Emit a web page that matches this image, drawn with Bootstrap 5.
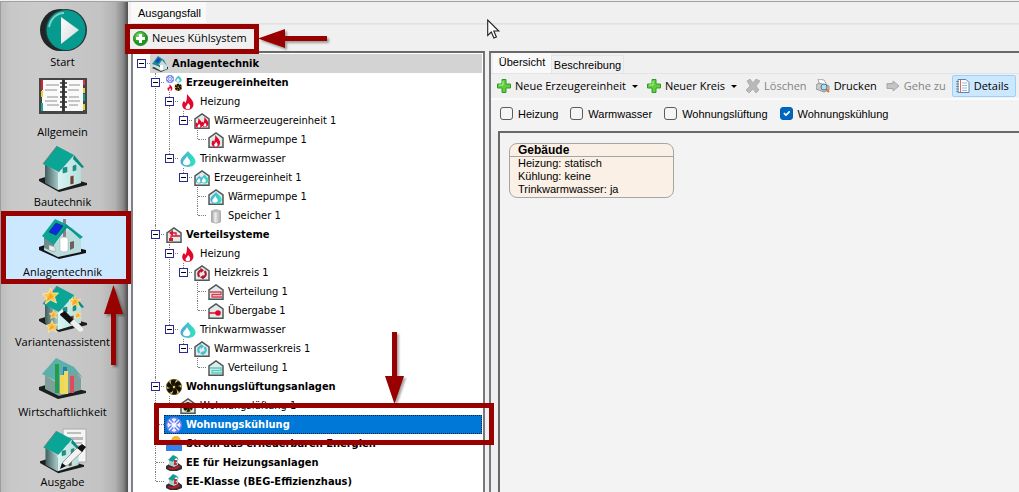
<!DOCTYPE html>
<html lang="de">
<head>
<meta charset="utf-8">
<meta name="viewport" content="width=device-width, initial-scale=1">
<title>Anlagentechnik</title>
<link href="https://cdn.jsdelivr.net/npm/bootstrap@5.3.0/dist/css/bootstrap.min.css" rel="stylesheet">
<style>
:root { --mark: #990000; }
body { font: 11px/16px "Open Sans", "Noto Sans", sans-serif; color: #000; background: #f0f0f0; }
button { font: inherit; color: inherit; }
.work { font-family: "Liberation Sans", Arial, sans-serif; min-width: 0; padding-left: 3px; }
.topline { border-top: 1px solid #a0a0a0; margin-top: 1px; }
.split { min-height: 0; }

/* module bar */
.modules { width: 128px; padding: 0 0 0 2px; border-left: 1px solid #9c9c9c;
  background: linear-gradient(90deg, #bcbcbc 0, #c8c8c8 10px, #cbcbcb 40px, #c3c3c3 100px, #b2b2b2 114px, #8a8a8a 122px, #4e4e4e 100%); }
.module { height: 70px; padding: 2px 0 0; border: 0; background: none; width: 119px; }
.module svg { width: 48px; height: 48px; display: block; margin: 0 auto; }
.module.current { background: #cce8ff; box-shadow: inset 0 0 0 1px #99d1ff; width: 124px; padding-right: 5px; }
.module-label { display: block; font-size: 11px; white-space: nowrap; }
.outline { position: absolute; border: 5px solid var(--mark); pointer-events: none; z-index: 5; }
.module .outline { top: -1px; bottom: -2px; left: -2px; right: -4px; }
.pointer { position: absolute; z-index: 6; pointer-events: none; overflow: visible; fill: var(--mark); filter: drop-shadow(2px 2px 1px rgba(0,0,0,.35)); }
.module svg.pointer { width: 19px; height: 80px; top: 73px; left: 101px; margin: 0; }
.create svg.pointer { left: 130px; top: 4px; }
.node svg.pointer { right: 78px; top: -83px; }

/* case tab and main toolbar */
.casebar { height: 22px; border-bottom: 1px solid #e2e2e2; }
.casetab { background: #f9f9f9; padding: 1px 7px 0; width: 75px; height: 21px; border: 0; text-align: left; }
.mainbar { height: 27px; border-top: 1px solid #e6e6e6; }
.create { border: 0; background: none; padding: 0 8px; gap: 4px; width: 134px; margin-left: -6px; font-family: "Open Sans", sans-serif; }
.create .outline { inset: -1px 0 -3px 0; }

/* tree */
.pane { border: 2px solid #696969; border-color: #696969 #a0a0a0 #a0a0a0 #808088; border-bottom: 0; }
.treepane { flex: 0 0 354px; background: #fff; padding: 1px 1px 0 0; font-family: "DejaVu Sans Condensed", "DejaVu Sans", sans-serif; border-right-color: #77777c; }
.tree ul { padding-left: 14px; }
.tree ul > li::before { content: ""; position: absolute; left: 8px; top: 0; bottom: 0; border-left: 1px dotted #808080; }
.tree ul > li:last-child::before { bottom: auto; height: 9px; }
.tree li { position: relative; }
.node { position: relative; height: 19px; padding-left: 4px; }
.node::before { content: ""; position: absolute; left: 9px; top: 9px; width: 8px; border-top: 1px dotted #808080; }
.toggle { width: 9px; height: 9px; border: 1px solid #2a2a90; background: #fff; padding: 0; position: relative; flex: none; }
.toggle::after { content: ""; display: block; height: 1px; background: #000; margin: 0 1px; }
.leafgap { width: 9px; flex: none; }
.nodetext { margin-left: 4px; padding: 1px 0 0 2px; height: 19px; gap: 4px; line-height: 18px; white-space: nowrap; }
.nodetext svg { width: 16px; height: 16px; flex: none; overflow: visible; }
.top-node > .nodetext { background: #d3d3d3; }
.chosen > .nodetext { background: #0078d7; color: #fff; outline: 1px dotted #10243a; outline-offset: -1px; }
.node .outline { left: 7px; right: -12px; top: -12px; bottom: -11px; }

/* overview */
.overview { border-right: 0; border-color: #696969 #696969 #696969 #77777c; margin-left: 4px; min-width: 0; }
.viewtabs { padding-left: 2px; }
.viewtab { border: 0; background: #f0f0f0; }
.viewtab.active { background: #f9f9f9; width: 58px; height: 20px; padding: 0 0 2px; }
.viewtab.other { width: 73px; height: 18px; border: 1px solid #e4e4e4; border-bottom: 0; padding: 0; }
.actions { height: 27px; border-top: 1px solid #e4e4e4; padding-left: 6px; gap: 9px; border-bottom: 2px solid #fbfbfb; font-family: "Open Sans", sans-serif; }
.action { border: 0; background: none; padding: 0; gap: 4px; white-space: nowrap; height: 22px; }
.action svg { width: 14px; height: 14px; }
.action:disabled { color: #838383; }
.action.drop::after { content: ""; border: 3px solid transparent; border-top-color: #000; border-bottom: 0; margin-left: 2px; }
.action.pressed { background: #cce8ff; border: 1px solid #99d1ff; border-radius: 2px; padding: 0 6px 0 3px; margin-left: -3px; }
.filters { background: #f3f3f3; height: 31px; padding: 0 0 4px 9px; gap: 12px; }
.filters label { gap: 5px; }
.filters .form-check-input { width: 13px; height: 13px; margin: 0; border: 1px solid #5c5c5c; border-radius: 3px; background-color: #f5f5f5; box-shadow: none; }
.filters .form-check-input:checked { background-color: #0067c0; border-color: #005fb8; background-size: 11px; }
.canvas { background: #f3f3f3; border-left: 2px solid #696969; border-top: 2px solid #696969; margin-left: 7px; padding: 10px 9px; }
.building { width: 165px; height: 55px; border: 1px solid #a5a5a5; border-radius: 8px; background: #faf0e6; }
.building h2 { font: bold 12px/12px "Liberation Sans", sans-serif; margin: 0; padding: 0 8px; border-bottom: 1px solid #a5a5a5; height: 13px; }
.building p { margin: 0; padding: 0 8px; line-height: 13px; }
.cursor { position: absolute; left: 359px; top: 17px; z-index: 9; }
</style>
</head>
<body>
<svg width="0" height="0" class="position-absolute" aria-hidden="true">
  <defs>
    <linearGradient id="steel"><stop offset="0" stop-color="#999"/><stop offset=".4" stop-color="#eee"/><stop offset="1" stop-color="#aaa"/></linearGradient>
    <linearGradient id="wall"><stop offset="0" stop-color="#d8f4f2"/><stop offset="1" stop-color="#b4dedd"/></linearGradient>
    <linearGradient id="side"><stop offset="0" stop-color="#3f5d5d"/><stop offset="1" stop-color="#a9c9c8"/></linearGradient>
    <linearGradient id="aqua"><stop offset="0" stop-color="#4fa9d8"/><stop offset="1" stop-color="#2fe5c0"/></linearGradient>
    <linearGradient id="play" x2="1" y2="1"><stop offset="0" stop-color="#fff"/><stop offset="1" stop-color="#cfd8d8"/></linearGradient>
    <radialGradient id="leaf" cx=".4" cy=".3"><stop offset="0" stop-color="#8fe26f"/><stop offset="1" stop-color="#1d9420"/></radialGradient>
    <symbol id="house" viewBox="0 1 48 48"><path d="M0 34l16-5 32 9v2L20 47 0 36z" fill="#1c1c1c"/><path d="M6 19l13 9v17L6 38z" fill="url(#side)"/><path d="M19 28L34 12l8 10v16l-23 7z" fill="url(#wall)"/><path d="M18 1l17 9-15 17L4 19z" fill="#0aa594"/><path d="M35 10l10 12-2 1-9-9z" fill="#078c7f"/><path d="M18 1L4 19" stroke="#6a7c7b"/><path d="M24 23l4-1v5l-4 1zM34 21l3-1v5l-3 1z" fill="#10978c" stroke="#3b7774" stroke-width=".6"/><path d="M31 31l4-1v9l-4 1z" fill="#6b4435" stroke="#dceeee" stroke-width=".7"/></symbol>
    <symbol id="star" viewBox="0 0 16 16"><path d="M8 0l2 5 6 0-4 4 2 6-6-3-5 4 1-6-4-4 6-1z" fill="#ffc64c" stroke="#fff3ae" stroke-width=".8"/><path d="M8 5l3 4-3 2-4 2 1-3z" fill="#f7a823"/></symbol>
    <symbol id="hut" viewBox="0 0 16 16"><path d="M1 15.300V6l7-5 7 5v9.300z" fill="#e3eaea" stroke="#4f5757" stroke-width="1.500"/></symbol>
    <symbol id="flame" viewBox="0 0 16 16"><path d="M7 0c2 3 5 5 6 8 1.500 4-1 8-5 8-5 0-7-4-5-8l1-1 1.500 2C7 6 7 3 7 0z" fill="#e3062c"/><path d="M8 9c2 2 2.500 3 2 5-.5 1.800-4 1.800-4.300 0C5 12 7.500 11.500 8 9z" fill="#fff"/></symbol>
    <symbol id="drop" viewBox="0 0 16 16"><path d="M8 0c2 3 8 6.500 7.500 11-1 6.500-14 6.500-15 0C0 6.500 6 3 8 0z" fill="url(#aqua)"/><path d="M7 5c1 3 4 4.500 3.300 7-1 3-6.800 3-7.300 0C3 9 6 8 7 5z" fill="#fff"/></symbol>
    <symbol id="flakes" viewBox="0 0 16 16"><circle cx="8" cy="8" r="8" fill="#6b7ff2"/><path d="M8 1v14M1 8h14M3 3l10 10M13 3L3 13M6 2l2 2 2-2M6 14l2-2 2 2M2 6l2 2-2 2M14 6l-2 2 2 2" fill="none" stroke="#fff" stroke-width="1.100"/></symbol>
    <symbol id="fan" viewBox="0 0 16 16"><circle cx="8" cy="8" r="7.700" fill="#f0cc4c" stroke="#332a10" stroke-width=".6"/><g fill="#14110a"><path id="bl" d="M8 8C5 6 4 3 5.500 1 7 .3 8.500.3 10 1 9 3 9 5 8 8z"/><use href="#bl" transform="rotate(60 8 8)"/><use href="#bl" transform="rotate(120 8 8)"/><use href="#bl" transform="rotate(180 8 8)"/><use href="#bl" transform="rotate(240 8 8)"/><use href="#bl" transform="rotate(300 8 8)"/></g><circle cx="8" cy="8" r="1.200" fill="#e8c84c"/></symbol>
    <symbol id="cycle" viewBox="0 0 16 16"><path d="M5 12A4.500 4.500 0 0 1 5 5l2-1M11 5a4.500 4.500 0 0 1 0 7l-2 1" fill="none" stroke="currentColor" stroke-width="2.600"/><path d="M6 1L10.500 4 6.500 7.500zM10 9.500l-4.500 3 4.500 3z" fill="currentColor"/></symbol>
    <symbol id="coil" viewBox="0 0 16 16"><path d="M2 8h11v2.500H4V13h10" fill="none" stroke="currentColor" stroke-width="1.300"/></symbol>
    <symbol id="eehouse" viewBox="0 0 16 16"><path d="M0 11l5-3 7 0 4 3v3l-5 2H4l-4-2z" fill="#30302f"/><path d="M3 5l5 2 4-3v6l-4 2-5-2z" fill="#a9cfcf"/><path d="M7 0L2 5l5 2 3-4 3 2-2-3z" fill="#159c90"/><path d="M2 12q6 2 11-2l1 2q-5 4-11 2z" fill="#c61725"/><path d="M9 5v5M8 6l3 0M8 9h3" stroke="#c61725" stroke-width="1.300"/></symbol>
    <symbol id="cross" viewBox="0 0 14 14"><path d="M5 .5h4V5h4.500v4H9v4.500H5V9H.5V5H5z" fill="#62ce3d" stroke="#2c9c26"/><path d="M6 2v4H2" fill="none" stroke="#b5f09a"/></symbol>
  </defs>
</svg>

<div class="d-flex vh-100 overflow-hidden">
  <nav class="modules flex-shrink-0 d-flex flex-column topline" aria-label="Module">
    <button class="module" type="button">
      <svg viewBox="0 0 48 48"><ellipse cx="21" cy="24" rx="20" ry="21" fill="#202626"/><ellipse cx="27" cy="24" rx="21" ry="21" fill="#263333"/><ellipse cx="27" cy="24" rx="19.500" ry="20" fill="#079b90"/><path d="M10 21C12 12 18 7 25 7" fill="none" stroke="#7ed0c9" stroke-width="2"/><path d="M22 11l18 13-18 14z" fill="url(#play)"/></svg>
      <span class="module-label">Start</span></button>
    <button class="module" type="button">
      <svg viewBox="0 0 48 48"><path d="M0 2h48v36H0z" fill="#454545"/><path d="M3 4h20v31H3zM26 4h18v31H26z" fill="#fafafa"/><path d="M2 4h2v10H2z" fill="#d92331"/><path d="M2 15h2v6H2z" fill="#e5d32e"/><path d="M2 27h2v8H2z" fill="#19a7a0"/><path d="M44 4h2v5h-2z" fill="#df3048"/><path d="M44 12h2v5h-2zM44 28h2v6h-2z" fill="#e5d32e"/><path d="M44 18h2v7h-2z" fill="#149993"/><path d="M7 9h13M6 14h12M8 21h11M6 25h12M8 29h12M30 9h11M29 14h11M30 21h10M29 25h12M30 29h9" stroke="#777" stroke-width=".8"/><path d="M24.500 3v34" stroke="#333" stroke-width="2"/><path d="M21 7h7M21 11h7M21 16h7M21 21h7M21 26h7M21 31h7" stroke="#333" stroke-width="1.300"/></svg>
      <span class="module-label">Allgemein</span></button>
    <button class="module" type="button">
      <svg viewBox="0 0 48 48"><use href="#house"/></svg>
      <span class="module-label">Bautechnik</span></button>
    <button class="module current position-relative" type="button" aria-current="page">
      <svg viewBox="0 0 48 48"><path d="M0 31l14-5 33 8v3l-27 6L0 34z" fill="#141414"/><path d="M5 20l11 6 17-15 9 10v15l-23 5-14-7z" fill="#b9dcde"/><path d="M5 20l10 7v9l-10-4z" fill="#708b8b"/><path d="M24 3h3v24h-3z" fill="#927f80"/><path d="M16 3l11 5 17 13-3 2-14-13-12 19L3 20z" fill="#0aa594"/><path d="M27 8L15 28l13-16 15 10z" fill="#0a9487"/><path d="M17 7l7 3-7 9-7-3z" fill="#1029df" stroke="#05246b" stroke-width=".6"/><path d="M21 22q4-2 8 0v13q-4 2-8 0z" fill="#fff" stroke="#9aa" stroke-width=".5"/><path d="M31 26l4-1v7l-4 2z" fill="#725c5c"/><path d="M10 29l6 2v5l-6-2z" fill="#e8eef0" stroke="#999" stroke-width=".5"/></svg>
      <span class="module-label">Anlagentechnik</span>
      <span class="outline"></span>
      <svg class="pointer" viewBox="0 0 19 80"><path d="M9.500 0L19 29h-7v51H7V29H0z"/></svg></button>
    <button class="module" type="button">
      <svg viewBox="0 0 48 48"><use href="#house"/><use href="#star" x="3" y="2" width="17" height="16"/><use href="#star" x="30" y="9" width="12" height="13"/><use href="#star" x="10" y="24" width="9" height="9"/><use href="#star" x="35" y="25" width="8" height="8"/><use href="#star" x="7" y="34" width="12" height="13"/><path d="M22 26l4-1 9 9-4 4-10-9z" fill="#111"/><path d="M31 37l4-4 10 10q-1 4-5 3z" fill="#eee" stroke="#aaa" stroke-width=".5"/><path d="M20 27l4-2" stroke="#fff" stroke-width="2"/></svg>
      <span class="module-label">Variantenassistent</span></button>
    <button class="module" type="button">
      <svg viewBox="0 0 48 48"><path d="M0 31l14-4 33 8v2l-28 6L0 34z" fill="#1b1f1e"/><path d="M6 19l12 8 16-14 8 9v12l-22 6-14-7z" fill="#7f9f9c"/><path d="M17 2l18 9 9 11-10-7-15 11L3 18z" fill="#5bb0a9"/><path d="M16 8h4v29h-4z" fill="#249c4d"/><path d="M21 19h4v19h-4z" fill="#efd954"/><path d="M24 11h4v8h-4z" fill="#257db3"/><path d="M25 15h4v23h-4z" fill="#efdb61"/><path d="M31 20h4v17h-4z" fill="#df4b5d"/></svg>
      <span class="module-label">Wirtschaftlichkeit</span></button>
    <button class="module" type="button">
      <svg viewBox="0 0 48 48"><path d="M24 3h23v33H24z" fill="#f4f4f4" stroke="#aaa"/><path d="M28 7h14M28 17h15M31 20h12" stroke="#888"/><path d="M27 11h17v3H27z" fill="#bbb"/><use href="#house" x="0" y="5" width="46" height="44"/><path d="M24 36l15-15 5 4-15 14-7 3z" fill="#f3f3f3" stroke="#777" stroke-width=".7"/><path d="M38 22l5-4 4 3-4 5z" fill="#111"/><path d="M21 43l2-6 4 3z" fill="#111"/></svg>
      <span class="module-label">Ausgabe</span></button>
  </nav>

  <main class="work flex-grow-1 d-flex flex-column position-relative topline">
    <svg class="cursor" width="14" height="21" viewBox="0 0 14 21"><path d="M.7 1v15.500l3.600-3.500 2.600 6 2.500-1-2.600-6h5z" fill="#fff" stroke="#222" stroke-width="1.100"/></svg>
    <div class="casebar flex-shrink-0"><button class="casetab" type="button">Ausgangsfall</button></div>
    <div class="mainbar flex-shrink-0 d-flex">
      <button class="create d-flex align-items-center position-relative" type="button">
        <svg width="15" height="15" viewBox="0 0 15 15"><circle cx="7.500" cy="7.500" r="7" fill="url(#leaf)" stroke="#27882a"/><path d="M6 3h3v3h3v3H9v3H6V9H3V6h3z" fill="#fff"/></svg>
        Neues Kühlsystem
        <span class="outline"></span>
        <svg class="pointer" width="74" height="19" viewBox="0 0 74 19"><path d="M3 9.500L30 0v7h42v5H30v7z"/></svg>
      </button>
    </div>
    <div class="split d-flex flex-grow-1">
      <section class="pane treepane" aria-label="Anlagenbaum">
        <ul class="tree list-unstyled m-0">
          <li><div class="node top-node d-flex"><button class="toggle align-self-center" aria-label="Zuklappen"></button><div class="nodetext flex-grow-1 d-flex align-items-center fw-bold"><svg viewBox="0 0 16 16"><path d="M0 12l5-3 11 2v2l-7 3z" fill="#333"/><path d="M2 8l6 3 4-5 3 3v4l-6 2-7-4z" fill="#c8e2e2"/><path d="M6 0L0 8l6 2 4-6 5 6-3-6z" fill="#168e98"/><path d="M6 2l3 1-3 4-3-1z" fill="#1745c8"/><path d="M8 9h3v5H8z" fill="#fff"/></svg>Anlagentechnik</div></div>
            <ul class="list-unstyled">
              <li><div class="node d-flex"><button class="toggle align-self-center" aria-label="Zuklappen"></button><div class="nodetext flex-grow-1 d-flex align-items-center fw-bold"><svg viewBox="0 0 16 16"><use href="#flakes" width="8" height="8"/><use href="#drop" x="9" width="7" height="8"/><use href="#flame" y="9" width="8" height="7"/><use href="#fan" x="8.500" y="8.500" width="7.500" height="7.500"/></svg>Erzeugereinheiten</div></div>
                <ul class="list-unstyled">
                  <li><div class="node d-flex"><button class="toggle align-self-center" aria-label="Zuklappen"></button><div class="nodetext d-flex align-items-center"><svg><use href="#flame"/></svg>Heizung</div></div>
                    <ul class="list-unstyled"><li><div class="node d-flex"><button class="toggle align-self-center" aria-label="Zuklappen"></button><div class="nodetext d-flex align-items-center"><svg viewBox="0 0 16 16"><use href="#hut"/><use href="#flame" x="0" y="5" width="10" height="10"/><use href="#flame" x="6" y="3" width="10" height="12"/></svg>Wärmeerzeugereinheit 1</div></div>
                      <ul class="list-unstyled"><li><div class="node d-flex"><span class="leafgap"></span><div class="nodetext d-flex align-items-center"><svg viewBox="0 0 16 16"><use href="#hut"/><use href="#flame" x="2" y="3" width="12" height="12"/></svg>Wärmepumpe 1</div></div></li></ul></li></ul></li>
                  <li><div class="node d-flex"><button class="toggle align-self-center" aria-label="Zuklappen"></button><div class="nodetext d-flex align-items-center"><svg><use href="#drop"/></svg>Trinkwarmwasser</div></div>
                    <ul class="list-unstyled"><li><div class="node d-flex"><button class="toggle align-self-center" aria-label="Zuklappen"></button><div class="nodetext d-flex align-items-center"><svg viewBox="0 0 16 16"><use href="#hut"/><use href="#drop" x="1.500" y="5" width="8" height="9"/><use href="#drop" x="6" y="4" width="9" height="10"/></svg>Erzeugereinheit 1</div></div>
                      <ul class="list-unstyled"><li><div class="node d-flex"><span class="leafgap"></span><div class="nodetext d-flex align-items-center"><svg viewBox="0 0 16 16"><use href="#hut"/><use href="#drop" x="2" y="3" width="12" height="12"/></svg>Wärmepumpe 1</div></div></li>
                        <li><div class="node d-flex"><span class="leafgap"></span><div class="nodetext d-flex align-items-center"><svg viewBox="0 0 16 16"><path d="M3.500 3q5-3 9 0v11q-4 2.500-9 0z" fill="url(#steel)" stroke="#999" stroke-width=".6"/><ellipse cx="8" cy="3" rx="4.500" ry="1.300" fill="#bbb"/></svg>Speicher 1</div></div></li></ul></li></ul></li>
                </ul></li>
              <li><div class="node d-flex"><button class="toggle align-self-center" aria-label="Zuklappen"></button><div class="nodetext flex-grow-1 d-flex align-items-center fw-bold"><svg viewBox="0 0 16 16"><use href="#hut"/><path d="M6 6h4v3M14 9H5v4" fill="none" stroke="#d9152e" stroke-width="1.300"/><path d="M7 3L3 6l4 3zM3 11h4v3H3z" fill="#d9152e"/></svg>Verteilsysteme</div></div>
                <ul class="list-unstyled">
                  <li><div class="node d-flex"><button class="toggle align-self-center" aria-label="Zuklappen"></button><div class="nodetext d-flex align-items-center"><svg><use href="#flame"/></svg>Heizung</div></div>
                    <ul class="list-unstyled"><li><div class="node d-flex"><button class="toggle align-self-center" aria-label="Zuklappen"></button><div class="nodetext d-flex align-items-center"><svg viewBox="0 0 16 16"><use href="#hut"/><use href="#cycle" x="1" y="2" width="14" height="13" color="#b5142c"/></svg>Heizkreis 1</div></div>
                      <ul class="list-unstyled"><li><div class="node d-flex"><span class="leafgap"></span><div class="nodetext d-flex align-items-center"><svg viewBox="0 0 16 16"><use href="#hut"/><use href="#coil" color="#dc3e50"/></svg>Verteilung 1</div></div></li>
                        <li><div class="node d-flex"><span class="leafgap"></span><div class="nodetext d-flex align-items-center"><svg viewBox="0 0 16 16"><use href="#hut"/><path d="M1 10h9" stroke="#e3062c" stroke-width="1.500"/><circle cx="10" cy="10" r="2.800" fill="#e3062c"/></svg>Übergabe 1</div></div></li></ul></li></ul></li>
                  <li><div class="node d-flex"><button class="toggle align-self-center" aria-label="Zuklappen"></button><div class="nodetext d-flex align-items-center"><svg><use href="#drop"/></svg>Trinkwarmwasser</div></div>
                    <ul class="list-unstyled"><li><div class="node d-flex"><button class="toggle align-self-center" aria-label="Zuklappen"></button><div class="nodetext d-flex align-items-center"><svg viewBox="0 0 16 16"><use href="#hut"/><use href="#cycle" x="1" y="2" width="14" height="13" color="#43bfd2"/></svg>Warmwasserkreis 1</div></div>
                      <ul class="list-unstyled"><li><div class="node d-flex"><span class="leafgap"></span><div class="nodetext d-flex align-items-center"><svg viewBox="0 0 16 16"><use href="#hut"/><use href="#coil" color="#51d1be"/></svg>Verteilung 1</div></div></li></ul></li></ul></li>
                </ul></li>
              <li><div class="node d-flex"><button class="toggle align-self-center" aria-label="Zuklappen"></button><div class="nodetext flex-grow-1 d-flex align-items-center fw-bold"><svg><use href="#fan"/></svg>Wohnungslüftungsanlagen</div></div>
                <ul class="list-unstyled"><li><div class="node d-flex"><span class="leafgap"></span><div class="nodetext d-flex align-items-center"><svg viewBox="0 0 16 16"><use href="#hut"/><use href="#fan" x="3" y="4" width="10" height="10"/></svg>Wohnungslüftung 1</div></div></li></ul></li>
              <li><div class="node chosen d-flex"><span class="leafgap"></span><div class="nodetext flex-grow-1 d-flex align-items-center fw-bold"><svg><use href="#flakes"/></svg>Wohnungskühlung</div>
                <span class="outline"></span><svg class="pointer" width="19" height="72" viewBox="0 0 19 72"><path d="M9.500 72L0 44h7V0h5v44h7z"/></svg></div></li>
              <li><div class="node d-flex"><span class="leafgap"></span><div class="nodetext flex-grow-1 d-flex align-items-center fw-bold"><svg viewBox="0 0 16 16"><circle cx="10" cy="5" r="5" fill="#f7b236"/><path d="M0 8h16v7H0z" fill="#2f83ea"/></svg>Strom aus erneuerbaren Energien</div></div></li>
              <li><div class="node d-flex"><span class="leafgap"></span><div class="nodetext flex-grow-1 d-flex align-items-center fw-bold"><svg><use href="#eehouse"/></svg>EE für Heizungsanlagen</div></div></li>
              <li><div class="node d-flex"><span class="leafgap"></span><div class="nodetext flex-grow-1 d-flex align-items-center fw-bold"><svg><use href="#eehouse"/></svg>EE-Klasse (BEG-Effizienzhaus)</div></div></li>
            </ul></li>
        </ul>
      </section>

      <section class="pane overview flex-grow-1 d-flex flex-column" aria-label="Ansicht">
        <div class="viewtabs d-flex align-items-end flex-shrink-0">
          <button class="viewtab active" type="button">Übersicht</button><button class="viewtab other" type="button">Beschreibung</button>
        </div>
        <div class="actions flex-shrink-0 d-flex align-items-center">
          <button class="action drop d-flex align-items-center" type="button"><svg><use href="#cross"/></svg>Neue Erzeugereinheit</button>
          <button class="action drop d-flex align-items-center" type="button"><svg><use href="#cross"/></svg>Neuer Kreis</button>
          <button class="action d-flex align-items-center" type="button" disabled><svg viewBox="0 0 14 14"><path d="M1 2l3-2 3 4 3-4 4 2-4 5 3 4-3 3-3-4-4 4-3-3 4-4z" fill="#b9b9b9" stroke="#a2a2a2" stroke-width=".7"/></svg>Löschen</button>
          <button class="action d-flex align-items-center" type="button"><svg viewBox="0 0 14 14"><path d="M2 0l6 1 3 5-7 1z" fill="#fff" stroke="#888" stroke-width=".7"/><path d="M0 6l3-2 10 3v4l-5 2-8-3z" fill="#c9c9c9" stroke="#777" stroke-width=".7"/><path d="M10 10l3 3" stroke="#e47922" stroke-width="2"/><circle cx="8" cy="8" r="3" fill="#a9dff5" stroke="#53798a"/></svg>Drucken</button>
          <button class="action d-flex align-items-center" type="button" disabled><svg viewBox="0 0 14 14"><path d="M1 4.500h6V2l6 5-6 5V9.500H1z" fill="#c4c4c4" stroke="#a6a6a6"/></svg>Gehe zu</button>
          <button class="action pressed d-flex align-items-center" type="button" aria-pressed="true"><svg viewBox="0 0 14 14"><path d="M2 .5h8l3 3v10H2z" fill="#fff" stroke="#6482ae"/><path d="M4.500 1v12" stroke="#d86868"/><path d="M6 4h5M6 6.500h5M6 9h5M6 11.500h5" stroke="#9bb6d8"/><path d="M0 2.500h3M0 5h3M0 7.500h3M0 10h3M0 12.500h3" stroke="#777" stroke-width=".8"/></svg>Details</button>
        </div>
        <div class="filters flex-shrink-0 d-flex align-items-center">
          <label class="d-flex align-items-center"><input class="form-check-input" type="checkbox">Heizung</label>
          <label class="d-flex align-items-center"><input class="form-check-input" type="checkbox">Warmwasser</label>
          <label class="d-flex align-items-center"><input class="form-check-input" type="checkbox">Wohnungslüftung</label>
          <label class="d-flex align-items-center"><input class="form-check-input" type="checkbox" checked>Wohnungskühlung</label>
        </div>
        <div class="canvas flex-grow-1">
          <article class="building"><h2>Gebäude</h2><p>Heizung: statisch</p><p>Kühlung: keine</p><p>Trinkwarmwasser: ja</p></article>
        </div>
      </section>
    </div>
  </main>
</div>
<script src="https://cdn.jsdelivr.net/npm/bootstrap@5.3.0/dist/js/bootstrap.bundle.min.js"></script>
</body>
</html>
